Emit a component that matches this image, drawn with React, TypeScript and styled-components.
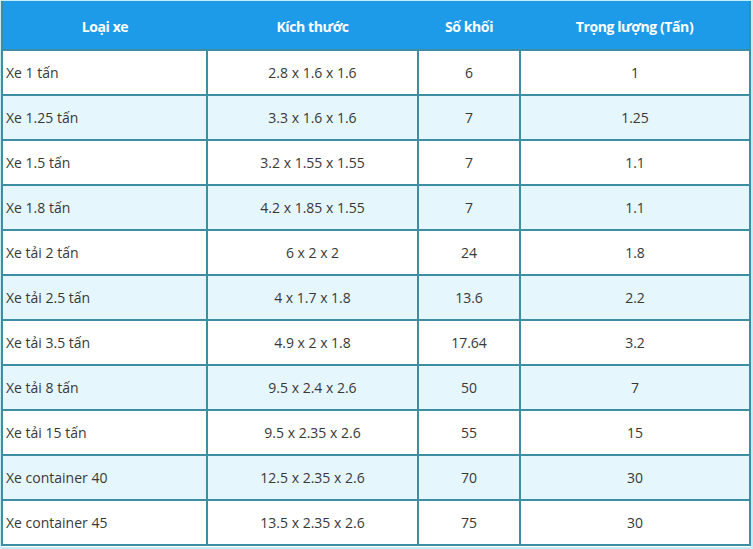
import React from 'react';
import styled, { createGlobalStyle } from 'styled-components';

const GlobalStyle = createGlobalStyle`
  body {
    margin: 0;
    background: #ffffff;
    font-family: "Open Sans", "Noto Sans", sans-serif;
  }
`;

const Frame = styled.div`
  width: 753px;
  height: 549px;
  box-sizing: border-box;
  border: 2px solid #c6ecf6;
  border-top: 1px solid #c6ecf6;
  border-left: 1px solid #c6ecf6;
  overflow: hidden;
`;

const Table = styled.table`
  width: 100%;
  border-collapse: collapse;
  table-layout: fixed;
  border: 2px solid #3d8ea3;
  border-top: none;
`;

const HeadCell = styled.th`
  background: #1d9be8;
  color: #ffffff;
  font-weight: 700;
  font-size: 14px;
  height: 49px;
  padding: 3px 0 0;
  box-sizing: border-box;
  text-align: center;
  letter-spacing: -0.4px;
`;

const Row = styled.tr<{ $alt: boolean }>`
  background: ${(p) => (p.$alt ? '#e6f6fd' : '#ffffff')};
`;

const Cell = styled.td<{ $left?: boolean }>`
  height: 43px;
  padding: 0 0 0 ${(p) => (p.$left ? '3px' : '0')};
  font-size: 14px;
  color: #383838;
  text-align: ${(p) => (p.$left ? 'left' : 'center')};
  border-top: 2px solid #3d8ea3;
  border-left: 2px solid #3d8ea3;
  &:first-child {
    border-left: none;
  }
`;

const rows = [
  ['Xe 1 tấn', '2.8 x 1.6 x 1.6', '6', '1'],
  ['Xe 1.25 tấn', '3.3 x 1.6 x 1.6', '7', '1.25'],
  ['Xe 1.5 tấn', '3.2 x 1.55 x 1.55', '7', '1.1'],
  ['Xe 1.8 tấn', '4.2 x 1.85 x 1.55', '7', '1.1'],
  ['Xe tải 2 tấn', '6 x 2 x 2', '24', '1.8'],
  ['Xe tải 2.5 tấn', '4 x 1.7 x 1.8', '13.6', '2.2'],
  ['Xe tải 3.5 tấn', '4.9 x 2 x 1.8', '17.64', '3.2'],
  ['Xe tải 8 tấn', '9.5 x 2.4 x 2.6', '50', '7'],
  ['Xe tải 15 tấn', '9.5 x 2.35 x 2.6', '55', '15'],
  ['Xe container 40', '12.5 x 2.35 x 2.6', '70', '30'],
  ['Xe container 45', '13.5 x 2.35 x 2.6', '75', '30'],
];

export default function App() {
  return (
    <>
      <GlobalStyle />
      <Frame>
        <Table>
          <colgroup>
            <col style={{ width: 205 }} />
            <col style={{ width: 211 }} />
            <col style={{ width: 102 }} />
            <col />
          </colgroup>
          <thead>
            <tr>
              <HeadCell>Loại xe</HeadCell>
              <HeadCell>Kích thước</HeadCell>
              <HeadCell>Số khối</HeadCell>
              <HeadCell>Trọng lượng (Tấn)</HeadCell>
            </tr>
          </thead>
          <tbody>
            {rows.map((r, i) => (
              <Row key={i} $alt={i % 2 === 1}>
                <Cell $left>{r[0]}</Cell>
                <Cell>{r[1]}</Cell>
                <Cell>{r[2]}</Cell>
                <Cell>{r[3]}</Cell>
              </Row>
            ))}
          </tbody>
        </Table>
      </Frame>
    </>
  );
}
